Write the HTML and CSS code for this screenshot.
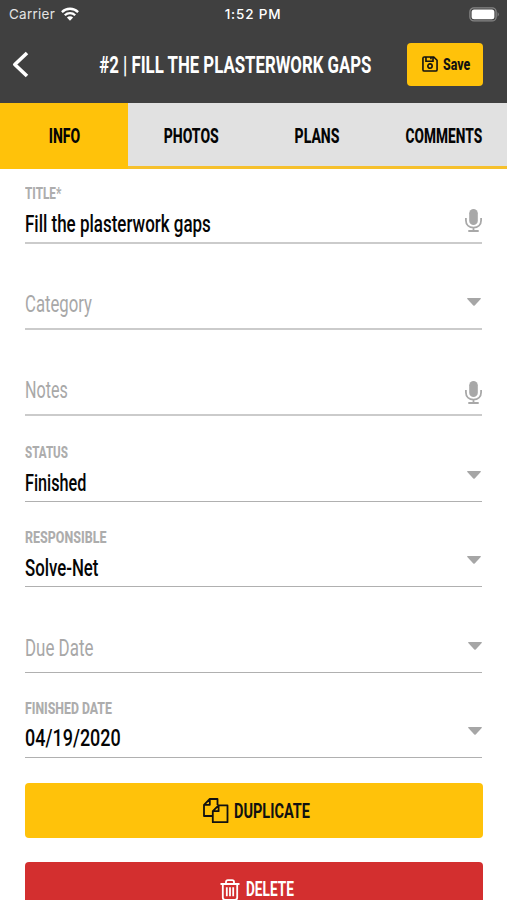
FILE: index.html
```html
<!DOCTYPE html>
<html lang="en">
<head>
<meta charset="utf-8">
<title>Fill the plasterwork gaps</title>
<link rel="stylesheet" href="styles.css">
</head>
<body>
<svg class="defs" width="0" height="0">
  <symbol id="mic" viewBox="0 0 17 23"><rect x="4.200" y="0" width="8.600" height="16" rx="4.300" fill="#a8a8a8"/><path d="M.9 9v2.200C.9 15.800 4.100 18.600 8.500 18.600s7.600-2.800 7.600-7.400V9M8.500 18.600v3M3.300 22h10.400" fill="none" stroke="#a8a8a8" stroke-width="1.800"/></symbol>
  <symbol id="caret" viewBox="0 0 14 8"><path d="M.7 0h12.600q.9.300.4 1L7.700 7.500q-.7.700-1.400 0L.3 1Q-.2.300.7 0z" fill="#a6a6a6"/></symbol>
</svg>
<header class="header">
  <div class="status-bar">
    <div class="carrier"><span>Carrier</span>
      <svg width="18" height="14" viewBox="0 0 18 14" fill="none" stroke="#fff" stroke-width="2.300"><path d="M.9 5.100a11.500 11.500 0 0 1 16.200 0M3.800 8.300a7.400 7.400 0 0 1 10.400 0"/><path d="M5.900 10.500a4.400 4.400 0 0 1 6.200 0L9 13.700z" fill="#fff" stroke="none"/></svg>
    </div>
    <span class="clock">1:52 PM</span>
    <svg class="battery" width="31" height="15" viewBox="0 0 31 15"><rect x=".9" y=".9" width="26.200" height="13" rx="4" fill="none" stroke="#858585" stroke-width="1.300"/><rect x="2.600" y="2.500" width="22.800" height="9.800" rx="2.500" fill="#fff"/><path d="M28.600 5q2.400 2.400 0 4.800z" fill="#858585"/></svg>
  </div>
  <div class="title-bar">
    <svg class="back" width="17" height="27" viewBox="0 0 17 27" fill="none" stroke="#fff" stroke-width="3.600" stroke-linejoin="round"><path d="M15 2 2.800 13.500 15 25"/></svg>
    <h1><span class="narrow">#2 | FILL THE PLASTERWORK GAPS</span></h1>
    <button class="save">
      <svg width="16" height="16" viewBox="0 0 17 17" fill="none" stroke="#111" stroke-width="1.700"><path d="M2.500 1h10L16 4.500v10q0 1.500-1.500 1.500h-12Q1 16 1 14.500v-12Q1 1 2.500 1zM4.200 1v4.600h7.500V1M9.500 1.500v2"/><circle cx="8.500" cy="10.700" r="2.300"/></svg>
      <span class="narrow">Save</span>
    </button>
  </div>
</header>
<nav class="tabs">
  <a class="tab active"><span class="narrow">INFO</span></a>
  <a class="tab"><span class="narrow">PHOTOS</span></a>
  <a class="tab"><span class="narrow">PLANS</span></a>
  <a class="tab comments"><span class="narrow">COMMENTS</span></a>
</nav>
<main class="form">
  <div class="field thick first"><div class="text"><label class="narrow title-label">TITLE*</label><span class="value narrow title-value">Fill the plasterwork gaps</span></div><svg class="mic"><use href="#mic"/></svg></div>
  <div class="field thick"><div class="text"><span class="placeholder narrow category">Category</span></div><svg class="caret"><use href="#caret"/></svg></div>
  <div class="field thick"><div class="text"><span class="placeholder narrow notes">Notes</span></div><svg class="mic"><use href="#mic"/></svg></div>
  <div class="field"><div class="text"><label class="narrow status-label">STATUS</label><span class="value narrow status-value">Finished</span></div><svg class="caret"><use href="#caret"/></svg></div>
  <div class="field short"><div class="text"><label class="narrow responsible-label">RESPONSIBLE</label><span class="value narrow responsible-value">Solve-Net</span></div><svg class="caret"><use href="#caret"/></svg></div>
  <div class="field date"><div class="text"><span class="placeholder narrow due">Due Date</span></div><svg class="caret"><use href="#caret"/></svg></div>
  <div class="field short date"><div class="text"><label class="narrow finished-label">FINISHED DATE</label><span class="value narrow finished-value">04/19/2020</span></div><svg class="caret"><use href="#caret"/></svg></div>
  <button class="action duplicate">
    <svg width="26" height="26" viewBox="0 0 26 26" fill="none" stroke="#111" stroke-width="1.800" stroke-linejoin="round"><path d="M9.800 18H1V6.800L6.800 1H14.500v6M1 6.800h5.800V1M9.800 13.200 15.600 7.400h8.900v16.800H9.800zM9.800 13.200h5.800V7.400"/></svg>
    <span class="narrow">DUPLICATE</span>
  </button>
  <button class="action delete">
    <svg width="20" height="22" viewBox="0 0 20 22" fill="none" stroke="#fff" stroke-width="1.800"><path d="M.5 5h19M6 5V3q0-1.900 1.900-1.900h4.200Q14 1.100 14 3v2M2.800 5v13.500q0 2.300 2.300 2.300h9.800q2.300 0 2.300-2.300V5M6.800 8.300v9M10 8.300v9M13.200 8.300v9"/></svg>
    <span class="narrow">DELETE</span>
  </button>
</main>
</body>
</html>
```
FILE: styles.css
```css
* { box-sizing: border-box; }
body { margin: 0; height: 900px; overflow: hidden; background: #fff; font-family: Roboto, sans-serif; color: #050505; }
button { border: 0; font: inherit; padding: 0; }
svg { display: block; flex: none; }
.defs { position: absolute; }
.narrow { display: inline-block; white-space: nowrap; transform: scaleX(var(--fit, .72)); }

.header { height: 103px; background: #404040; color: #fff; }
.status-bar { display: grid; grid-template-columns: 1fr auto 1fr; align-items: center; height: 28px; padding: 0 7px 0 9px; font: 500 13.500px Inter, sans-serif; }
.carrier { display: flex; align-items: center; gap: 6px; font-weight: 400; letter-spacing: .25px; color: #e4e4e4; }
.clock { margin-left: -3px; letter-spacing: .8px; }
.battery { justify-self: end; }
.title-bar { display: grid; grid-template-columns: 64px 1fr 76px; align-items: center; height: 73px; padding: 0 24px 0 12px; }
.title-bar h1 { display: flex; justify-content: center; width: 319px; min-width: 0; margin: 2px 0 0; font-size: 23px; font-weight: 700; line-height: 28px; --fit: .73; }
.save { display: flex; align-items: center; gap: 5px; width: 76px; height: 43px; margin-top: -1px; padding-left: 15px; border-radius: 4px; background: #ffc20a; color: #111; font-size: 16.500px; font-weight: 800; }
.save .narrow { transform-origin: left; --fit: .75; }

.tabs { display: grid; grid-template-columns: 128px 1fr 1fr 1fr; height: 66px; background: #e1e1e1; border-bottom: 3px solid #f6c02c; }
.tab { display: flex; align-items: center; justify-content: center; padding-top: 3px; font-size: 20px; font-weight: 800; --fit: .7; }
.tab.active { margin-bottom: -3px; padding-bottom: 3px; background: #ffc20a; }
.tab.comments { --fit: .685; }

.form { padding: 0 25px; }
.field { display: flex; align-items: flex-end; justify-content: space-between; height: 86px; border-bottom: 1px solid #b0b0b0; }
.field.thick { border-bottom: 2px solid #cbcbcb; }
.field.short { height: 85px; }
.field.first { height: 75px; }
.text { display: flex; flex-direction: column; align-items: flex-start; }
.text .narrow { transform-origin: left; }
.text label { margin-bottom: 6px; font-size: 16.500px; line-height: 20px; font-weight: 800; color: #adadad; }
.value, .placeholder { font-size: 23.500px; line-height: 28px; }
.value { padding-bottom: 4px; font-weight: 500; }
.placeholder { padding-bottom: 10px; color: #a8a8a8; }
.mic { width: 17px; height: 23px; margin-bottom: 10px; }
.caret { width: 14px; height: 8px; margin-right: 1px; margin-bottom: 22px; }
.date .caret { margin-right: 0; }
.title-label { --fit: .71; }
.title-value { --fit: .722; }
.category { --fit: .712; }
.notes { --fit: .685; }
.status-label { --fit: .7; }
.status-value { --fit: .69; }
.responsible-label { --fit: .755; }
.responsible-value { --fit: .715; }
.due { --fit: .72; }
.finished-label { --fit: .745; }
.text .finished-value { --fit: .765; padding-bottom: 5px; }
.text .finished-label { margin-bottom: 5px; }

.action { display: flex; align-items: center; width: 458px; height: 55px; margin-top: 25px; border-radius: 4px; font-size: 20px; font-weight: 700; }
.action .narrow { transform-origin: left; }
.duplicate { gap: 5px; padding-left: 178px; background: #ffc20a; color: #111; --fit: .725; }
.delete { gap: 6px; margin-top: 24px; padding-left: 195px; background: #d32f2f; color: #fff; font-size: 19.500px; --fit: .7; }
.delete .narrow { line-height: 20px; }
```
